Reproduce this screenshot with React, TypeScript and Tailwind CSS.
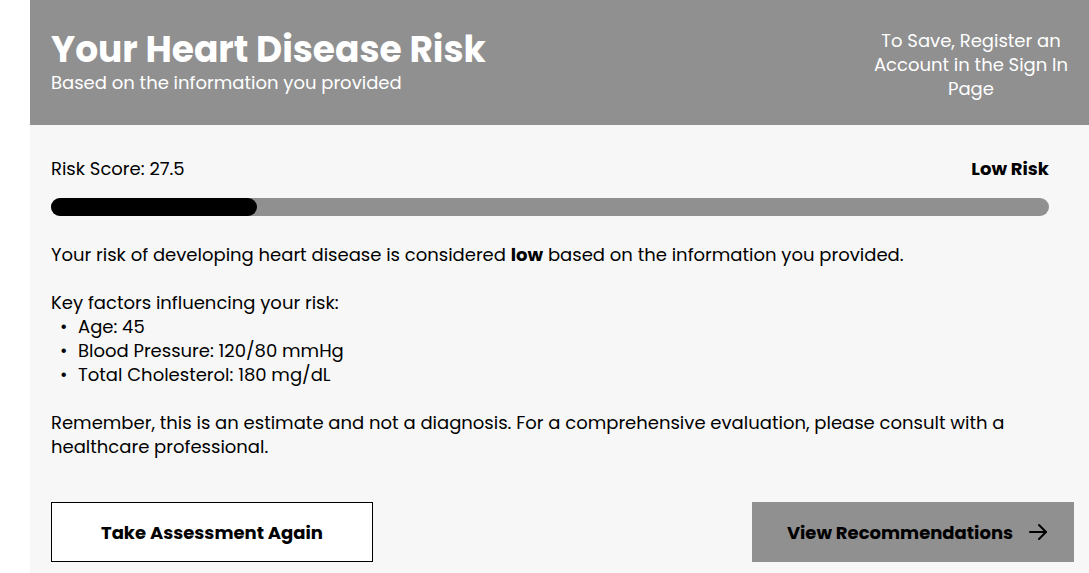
import React from 'react';

const font = { fontFamily: '"Poppins", "Open Sans", "Noto Sans", sans-serif' };

const factors = ['Age: 45', 'Blood Pressure: 120/80 mmHg', 'Total Cholesterol: 180 mg/dL'];

export default function App() {
  const score = 27.5;

  return (
    <div className="w-[1089px] h-[573px] overflow-hidden bg-white" style={font}>
      <div className="ml-[30px] w-[1080px] bg-[#f7f7f7] text-black">
        {/* Header */}
        <div className="flex h-[125px] items-center justify-between bg-[#909090] pl-[21px] text-white">
          <div className="pb-[2px]">
            <h1 className="text-[36px] font-bold leading-[42px]">Your Heart Disease Risk</h1>
            <p className="text-[18px] leading-[24px]">Based on the information you provided</p>
          </div>
          <p className="mr-[38px] w-[202px] pt-[5px] text-center text-[18px] leading-[24px]">
            To Save, Register an Account in the Sign In Page
          </p>
        </div>

        {/* Body */}
        <div className="pl-[21px] pt-[32px] pb-[12px]">
          <div className="flex w-[998px] items-center justify-between text-[18px] leading-[24px]">
            <span>Risk Score: {score}</span>
            <span className="font-bold">Low Risk</span>
          </div>

          <div className="mt-[17px] h-[18px] w-[998px] rounded-full bg-[#909090]">
            <div className="h-full w-[206px] rounded-full bg-black" />
          </div>

          <div className="mt-[27px] text-[18px] leading-[24px]">
            <p>
              Your risk of developing heart disease is considered <b>low</b> based on the information you provided.
            </p>

            <p className="mt-[24px]">Key factors influencing your risk:</p>
            <ul>
              {factors.map((f) => (
                <li key={f} className="flex">
                  <span className="w-[27px] pl-[9px]">•</span>
                  <span>{f}</span>
                </li>
              ))}
            </ul>

            <p className="mt-[24px] w-[980px]">
              Remember, this is an estimate and not a diagnosis. For a comprehensive evaluation, please consult with a
              healthcare professional.
            </p>
          </div>

          <div className="mt-[43px] flex w-[1023px] justify-between">
            <button
              type="button"
              className="h-[60px] w-[322px] border border-black bg-white text-[18px] font-bold"
            >
              Take Assessment Again
            </button>
            <button
              type="button"
              className="flex h-[60px] w-[322px] items-center justify-center gap-[13px] bg-[#909090] pl-[11px] text-[18px] font-bold"
            >
              View Recommendations
              <svg width="24" height="24" viewBox="0 0 24 24" fill="none" stroke="currentColor" strokeWidth="2" strokeLinecap="round" strokeLinejoin="round">
                <path d="M4 12h16" />
                <path d="M13 5l7 7-7 7" />
              </svg>
            </button>
          </div>
        </div>
      </div>
    </div>
  );
}
